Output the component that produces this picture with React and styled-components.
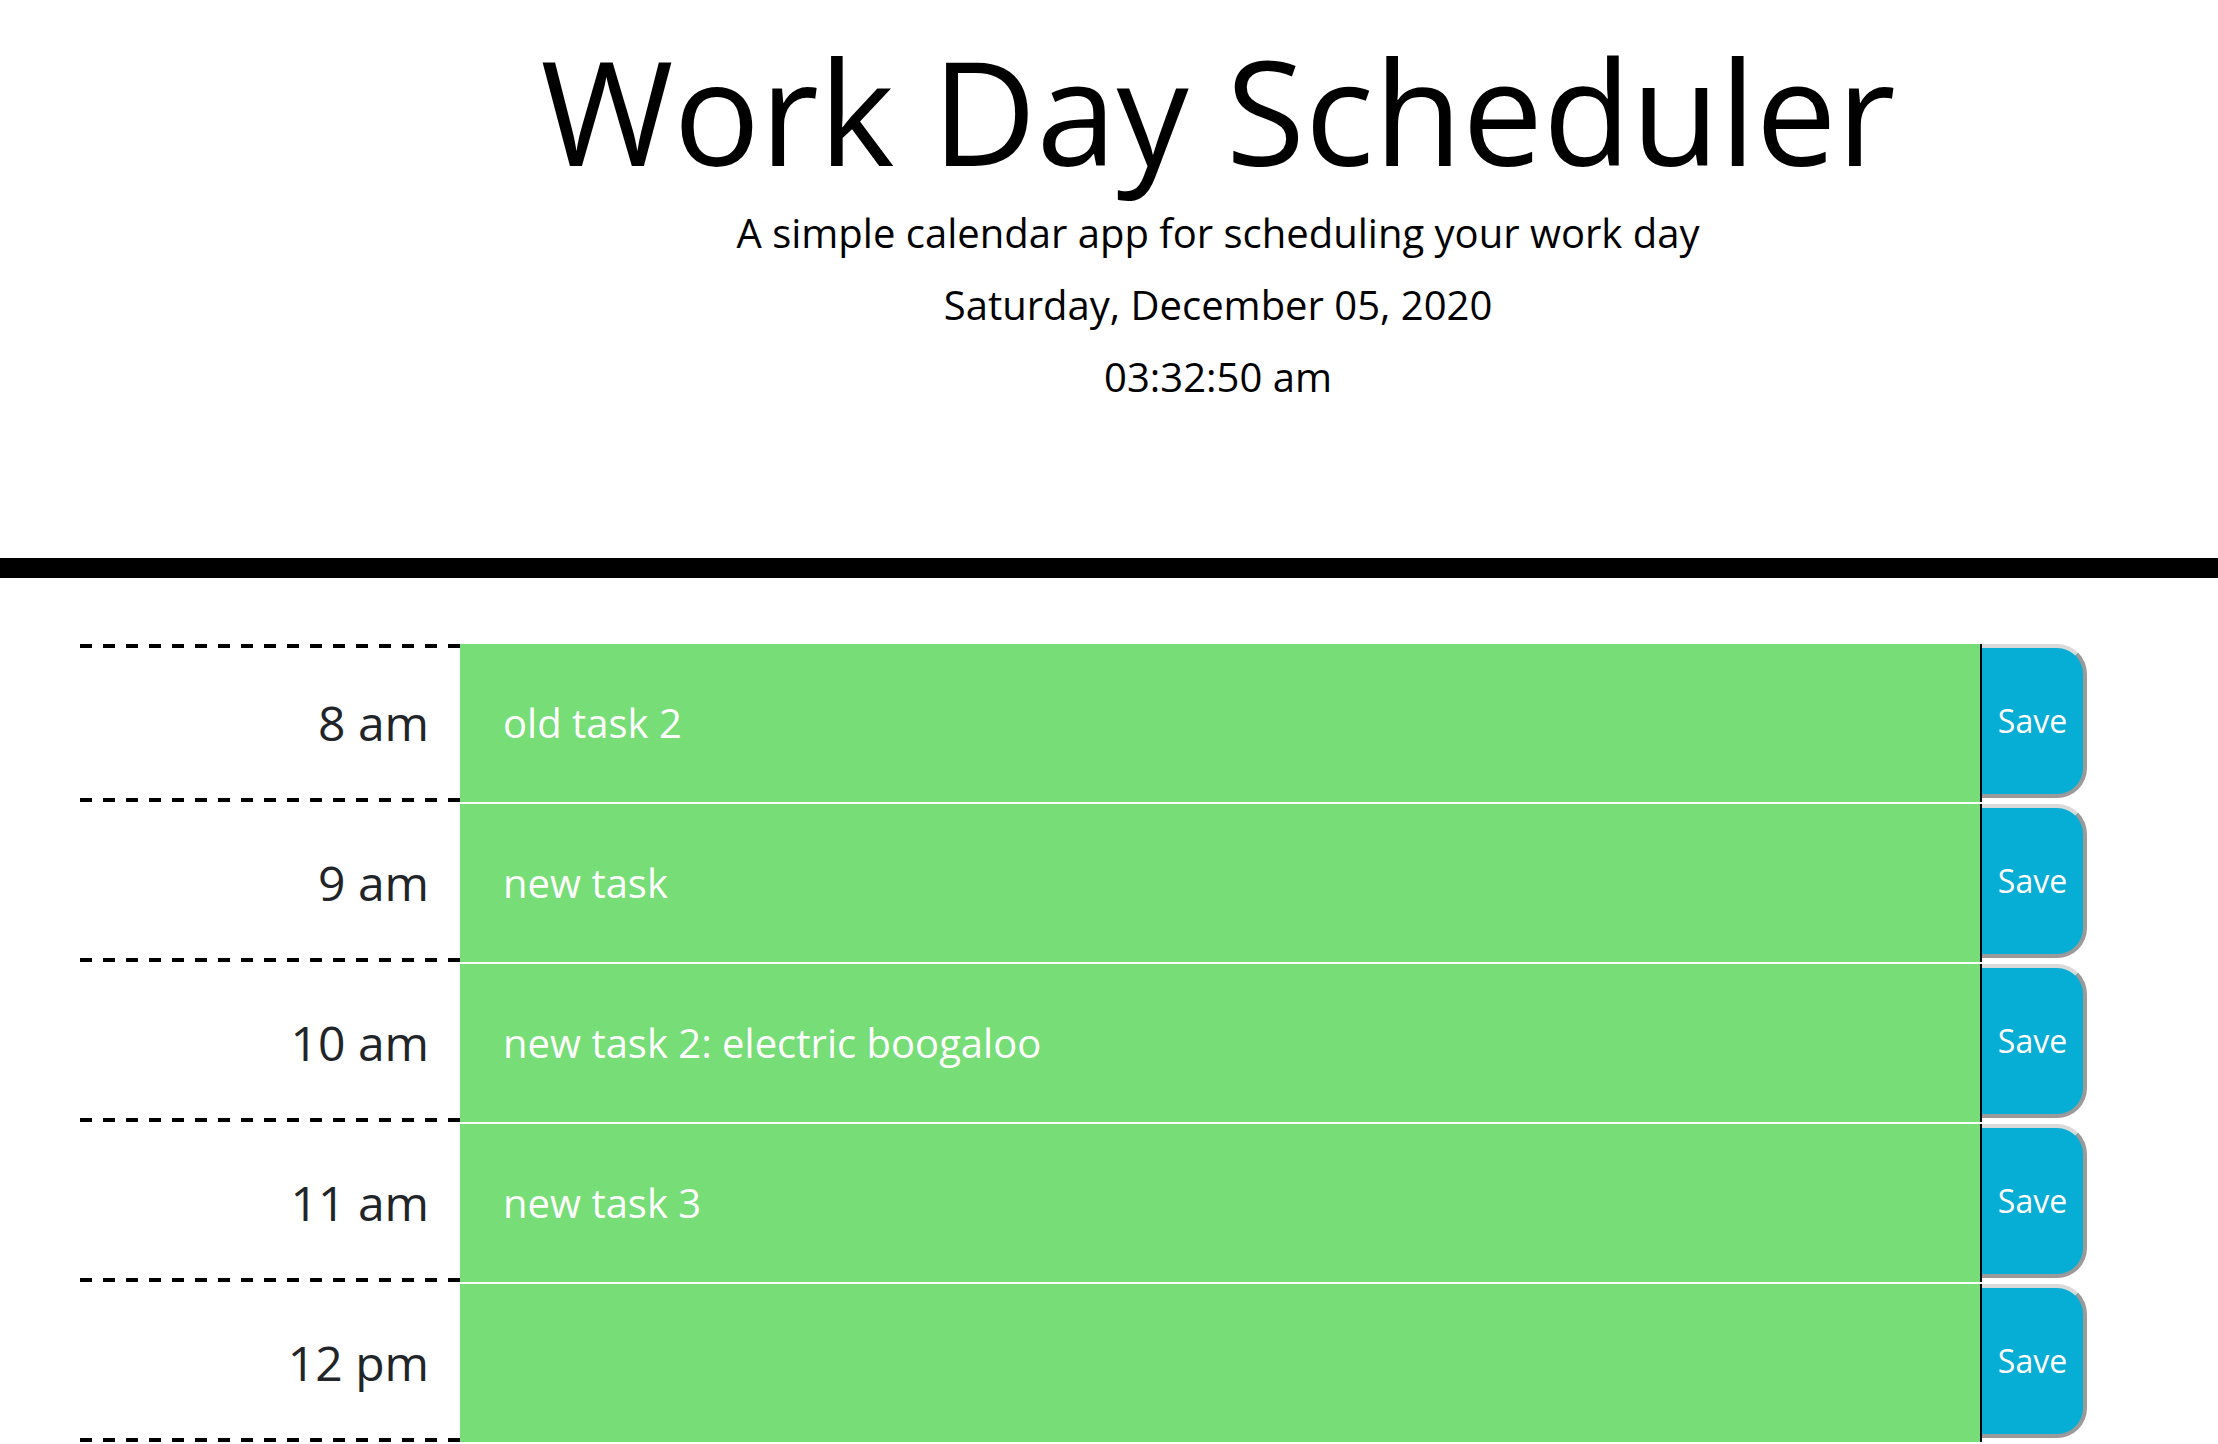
import styled, { createGlobalStyle } from 'styled-components';

const GlobalStyle = createGlobalStyle`
  html, body {
    margin: 0;
    padding: 0;
    overflow: hidden;
    background: #ffffff;
  }
  body {
    font-family: "Open Sans", "Liberation Sans", sans-serif;
    line-height: 1;
    color: #212529;
  }
`;

const hours = [
  { label: '8 am', task: 'old task 2' },
  { label: '9 am', task: 'new task' },
  { label: '10 am', task: 'new task 2: electric boogaloo' },
  { label: '11 am', task: 'new task 3' },
  { label: '12 pm', task: '' },
  { label: '1 pm', task: '' },
  { label: '2 pm', task: '' },
  { label: '3 pm', task: '' },
  { label: '4 pm', task: '' },
  { label: '5 pm', task: '' },
];

export default function App() {
  return (
    <>
      <GlobalStyle />
      <Jumbotron>
        <Title>Work Day Scheduler</Title>
        <Lead>A simple calendar app for scheduling your work day</Lead>
        <Lead>Saturday, December 05, 2020</Lead>
        <Lead>03:32:50 am</Lead>
      </Jumbotron>
      <Container>
        {hours.map((h, i) => (
          <Row key={h.label}>
            <Hour $first={i === 0}>{h.label}</Hour>
            <Description defaultValue={h.task} $state="future" />
            <SaveBtn>Save</SaveBtn>
          </Row>
        ))}
      </Container>
    </>
  );
}

const Jumbotron = styled.header`
  text-align: center;
  color: #000000;
  padding: 24px 0 129px 218px;
  border-bottom: 20px solid #000000;
  margin-bottom: 64px;
`;

const Title = styled.h1`
  font-size: 144px;
  font-weight: 400;
  line-height: 1.2;
  margin: 0 0 16px 0;
`;

const Lead = styled.p`
  font-size: 40px;
  line-height: 40px;
  margin: 0 0 32px 0;
`;

const Container = styled.main`
  padding-left: 80px;
  width: 2007px;
`;

const Row = styled.div`
  display: flex;
  height: 160px;
  box-sizing: border-box;
  border-top: 2px solid #ffffff;
`;

const dashes = 'repeating-linear-gradient(to right, #000000 0 12px, transparent 12px 23px)';

const Hour = styled.div`
  width: 380px;
  flex: none;
  box-sizing: border-box;
  display: flex;
  align-items: center;
  justify-content: flex-end;
  padding: 4px 31px 4px 0;
  font-size: 48px;
  font-weight: 500;
  color: #212529;
  background-color: #ffffff;
  background-image: ${p => (p.$first ? `${dashes}, ${dashes}` : dashes)};
  background-repeat: no-repeat;
  background-size: 100% 4px;
  background-position: ${p => (p.$first ? 'left bottom, left top' : 'left bottom')};
`;

const stateColors = {
  past: '#d3d3d3',
  present: '#ff6961',
  future: '#77dd77',
};

const Description = styled.textarea`
  flex: 1;
  box-sizing: border-box;
  height: 100%;
  margin: 0;
  resize: none;
  outline: none;
  border: none;
  border-right: 2px solid #000000;
  background: ${p => stateColors[p.$state]};
  color: #ffffff;
  font-family: "Open Sans", "Liberation Sans", sans-serif;
  font-size: 40px;
  line-height: 40px;
  padding: 59px 40px 0 43px;
  overflow: hidden;
`;

const SaveBtn = styled.button`
  width: 105px;
  height: 154px;
  flex: none;
  box-sizing: border-box;
  margin: 0;
  padding: 0;
  background: #06aed5;
  color: #ffffff;
  font-family: "Open Sans", "Liberation Sans", sans-serif;
  font-size: 32px;
  border-style: solid;
  border-width: 4px 4px 4px 0;
  border-color: #dadada #9a9a9a #9a9a9a transparent;
  border-radius: 0 30px 30px 0;
  cursor: pointer;
`;
